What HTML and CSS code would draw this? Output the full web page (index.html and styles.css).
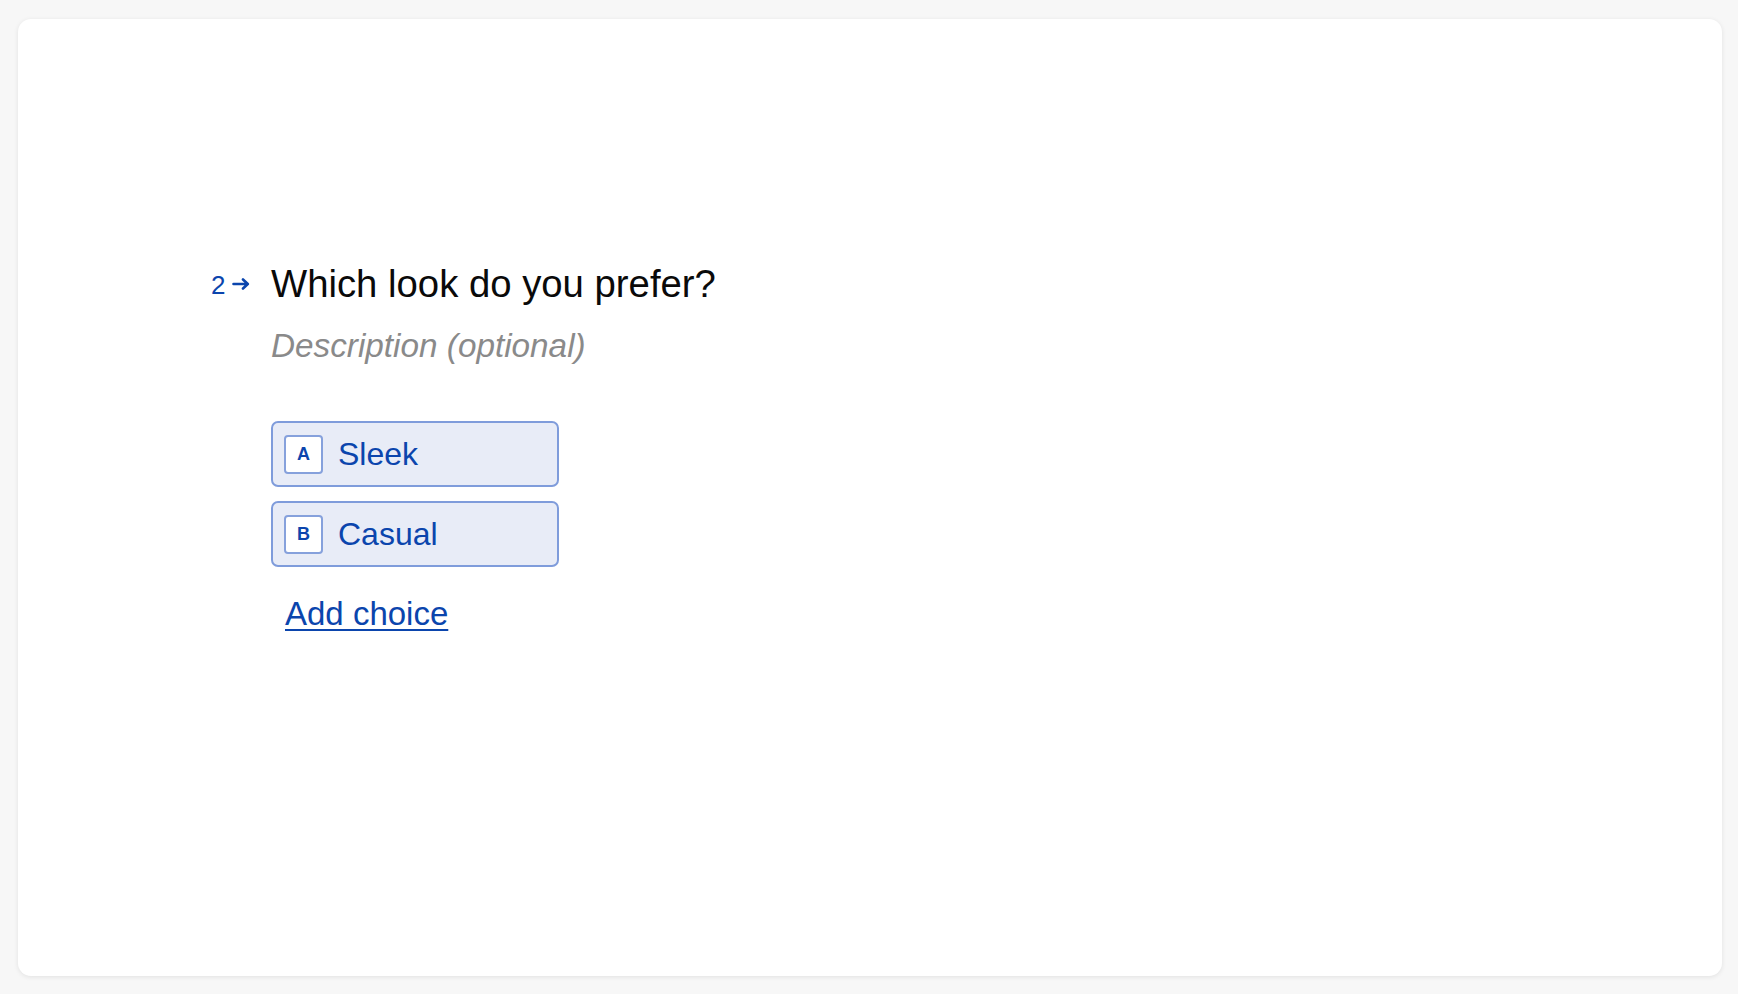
FILE: index.html
```html
<!DOCTYPE html>
<html lang="en">
<head>
<meta charset="utf-8">
<title>Question</title>
<link rel="stylesheet" href="styles.css">
</head>
<body>
<main class="card">
  <section class="question">
    <div class="q-num">
      <span class="q-digit">2</span>
      <svg class="q-arrow" width="18" height="12" viewBox="0 0 18 12" aria-hidden="true">
        <path d="M1.5 6 H15.5 M11 1.5 L15.8 6 L11 10.5" fill="none" stroke="#0b45ad" stroke-width="2.6" stroke-linecap="round" stroke-linejoin="round"/>
      </svg>
    </div>
    <div class="q-body">
      <h1 class="q-title">Which look do you prefer?</h1>
      <p class="q-desc">Description (optional)</p>
      <ul class="choices">
        <li class="choice"><span class="key">A</span><span class="label">Sleek</span></li>
        <li class="choice"><span class="key">B</span><span class="label">Casual</span></li>
      </ul>
      <a class="add" href="#">Add choice</a>
    </div>
  </section>
</main>
</body>
</html>
```
FILE: styles.css
```css
html, body {
  margin: 0;
  padding: 0;
}
body {
  background: #f7f7f7;
  font-family: "Liberation Sans", Arial, sans-serif;
  padding: 19px 16px 18px 18px;
  box-sizing: border-box;
  height: 994px;
}
.card {
  background: #ffffff;
  border-radius: 13px;
  box-shadow: 0 1px 5px rgba(0, 0, 0, 0.09);
  height: 957px;
  box-sizing: border-box;
  padding: 242px 0 0 193px;
}
.question {
  display: flex;
  align-items: flex-start;
}
.q-num {
  width: 60px;
  height: 46px;
  display: flex;
  align-items: center;
  gap: 7px;
  color: #0b45ad;
}
.q-digit {
  font-size: 26px;
  line-height: 1;
  margin-top: 1px;
}
.q-arrow {
  display: block;
}
.q-body {
  display: flex;
  flex-direction: column;
  align-items: flex-start;
}
.q-title {
  margin: 0;
  font-size: 38.3px;
  line-height: 46px;
  font-weight: 400;
  color: #0a0a0a;
}
.q-desc {
  margin: 19px 0 0;
  font-size: 33.3px;
  line-height: 40px;
  font-style: italic;
  color: #8a8a8a;
}
.choices {
  list-style: none;
  margin: 55px 0 0;
  padding: 0;
  display: flex;
  flex-direction: column;
  gap: 14px;
}
.choice {
  width: 288px;
  height: 66px;
  box-sizing: border-box;
  border: 2px solid #7f9cdb;
  border-radius: 7px;
  background: #e8ecf7;
  display: flex;
  align-items: center;
  padding-left: 11px;
  gap: 15px;
}
.key {
  width: 39px;
  height: 39px;
  box-sizing: border-box;
  border: 2px solid #86a1dc;
  border-radius: 4px;
  background: #ffffff;
  display: flex;
  align-items: center;
  justify-content: center;
  font-size: 18px;
  font-weight: 700;
  color: #0b45ad;
}
.label {
  font-size: 32px;
  line-height: 38px;
  color: #0b45ad;
}
.add {
  margin: 28px 0 0 14px;
  font-size: 33px;
  line-height: 38px;
  color: #0b45ad;
  text-decoration: underline;
  text-decoration-thickness: 2px;
  text-underline-offset: 4px;
}
```
